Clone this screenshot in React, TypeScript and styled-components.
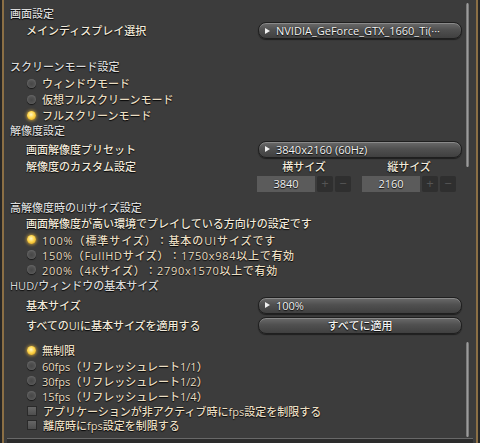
import styled, { createGlobalStyle } from "styled-components";

const GlobalStyle = createGlobalStyle`
  html, body {
    margin: 0;
    padding: 0;
    background: #262626;
  }
  body {
    font-family: "Open Sans", "Noto Sans CJK JP", sans-serif;
    font-size: 11px;
    font-weight: 500;
    text-spacing-trim: space-all;
  }
`;

const colours = {
  panel: "#3c3c3c",
  gold: "#8b6f45",
  heading: "#dadada",
  label: "#f2eadb",
  option: "#eadfc4",
};

const Window = styled.div`
  width: 480px;
  height: 443px;
  box-sizing: border-box;
  padding: 0 2px;
  background: #262626;
  display: flex;
  flex-direction: column;
`;

const Frame = styled.div`
  flex: 1;
  display: flex;
  flex-direction: column;
  border-left: 2px solid ${colours.gold};
  border-right: 2px solid ${colours.gold};
  background: ${colours.panel};
  text-shadow: 0 1px 1px rgba(0, 0, 0, 0.9), 0 0 1px rgba(0, 0, 0, 0.6);
`;

const Panel = styled.div<{ $height: number }>`
  height: ${(p) => p.$height}px;
  display: flex;
  flex-shrink: 0;
`;

const Content = styled.div<{ $top: number }>`
  flex: 1;
  padding: ${(p) => p.$top}px 0 0 6px;
  display: flex;
  flex-direction: column;
`;

const ScrollTrack = styled.div<{ $top: number }>`
  width: 4px;
  margin: 0 6px 0 4px;
  padding-top: ${(p) => p.$top}px;
`;

const Thumb = styled.div<{ $height: number }>`
  height: ${(p) => p.$height}px;
  width: 3px;
  border-radius: 2px;
  background: linear-gradient(to right, #6a6a6a, #9c9c9c 50%, #6a6a6a);
`;

const Footer = styled.div`
  height: 4px;
  margin: 0 3px;
  border-top: 1px solid #686868;
  background: #2c2c2c;
`;

const Heading = styled.div<{ $mt?: number }>`
  height: 16px;
  line-height: 16px;
  margin-top: ${(p) => p.$mt ?? 0}px;
  color: ${colours.heading};
  white-space: nowrap;
`;

const SettingRow = styled.div<{ $height: number; $mt?: number; $align?: string }>`
  display: grid;
  grid-template-columns: 1fr 204px;
  align-items: ${(p) => p.$align ?? "center"};
  height: ${(p) => p.$height}px;
  margin-top: ${(p) => p.$mt ?? 0}px;
  padding-left: 16px;
`;

const Label = styled.div`
  color: ${colours.label};
  line-height: 17px;
  white-space: nowrap;
`;

const Note = styled.div`
  height: 16px;
  line-height: 16px;
  padding-left: 16px;
  color: ${colours.label};
  white-space: nowrap;
`;

const Option = styled.div<{ $height: number; $spread?: number }>`
  display: flex;
  align-items: center;
  gap: 6px;
  height: ${(p) => p.$height}px;
  padding-left: 17px;
  color: ${colours.option};
  letter-spacing: ${(p) => p.$spread ?? 0}px;
  white-space: nowrap;
`;

const Radio = styled.span<{ $on?: boolean }>`
  width: 9px;
  height: 9px;
  border-radius: 50%;
  flex-shrink: 0;
  background: ${(p) =>
    p.$on
      ? "radial-gradient(circle at 45% 40%, #fff6c4 0, #ffd54a 45%, #c98d12 100%)"
      : "radial-gradient(circle at 50% 55%, #474747 0, #525252 45%, #7a7a7a 100%)"};
  box-shadow: ${(p) =>
    p.$on ? "0 0 3px 1px rgba(255, 196, 60, 0.55)" : "0 1px 1px rgba(0, 0, 0, 0.6)"};
`;

const Check = styled.span`
  width: 8px;
  height: 8px;
  flex-shrink: 0;
  border: 1px solid #2a2a2a;
  background: linear-gradient(#666, #4e4e4e);
`;

const Pill = styled.div<{ $center?: boolean }>`
  height: 17px;
  box-sizing: border-box;
  display: flex;
  align-items: center;
  justify-content: ${(p) => (p.$center ? "center" : "flex-start")};
  padding-left: ${(p) => (p.$center ? 0 : 6)}px;
  border: 1px solid #1f1f1f;
  border-radius: 8px;
  background: linear-gradient(#6b6b6b, #505050 45%, #404040);
  box-shadow: inset 0 1px 0 rgba(255, 255, 255, 0.22), 0 1px 1px rgba(0, 0, 0, 0.5);
  color: #f4f4f4;
  white-space: nowrap;
  overflow: hidden;
`;

const Arrow = styled.span`
  width: 0;
  height: 0;
  margin-right: 6px;
  border-left: 5px solid #f0f0f0;
  border-top: 3px solid transparent;
  border-bottom: 3px solid transparent;
`;

const SizeControls = styled.div`
  display: flex;
  gap: 11px;
  margin-left: -1px;
`;

const SizeGroup = styled.div`
  display: flex;
  flex-direction: column;
  align-items: center;
`;

const Caption = styled.div`
  line-height: 18px;
  color: ${colours.label};
`;

const Stepper = styled.div`
  display: flex;
  gap: 2px;
`;

const NumBox = styled.div`
  width: 58px;
  height: 16px;
  line-height: 16px;
  text-align: center;
  background: #5b5b5b;
  color: #f2f2f2;
`;

const StepButton = styled.div`
  width: 16px;
  height: 16px;
  line-height: 15px;
  text-align: center;
  border-radius: 2px;
  background: #2f2f2f;
  color: #555;
  font-size: 13px;
  text-shadow: none;
`;

const Dropdown = ({ value }: { value: string }) => (
  <Pill>
    <Arrow />
    {value}
  </Pill>
);

const SizeInput = ({ caption, value }: { caption: string; value: string }) => (
  <SizeGroup>
    <Caption>{caption}</Caption>
    <Stepper>
      <NumBox>{value}</NumBox>
      <StepButton>+</StepButton>
      <StepButton>−</StepButton>
    </Stepper>
  </SizeGroup>
);

const App = () => {
  return (
    <Window>
      <GlobalStyle />
      <Frame>
        <Panel $height={337}>
          <Content $top={6}>
            <Heading>画面設定</Heading>
            <SettingRow $height={17}>
              <Label>メインディスプレイ選択</Label>
              <Dropdown value="NVIDIA_GeForce_GTX_1660_Ti(···" />
            </SettingRow>

            <Heading $mt={20}>スクリーンモード設定</Heading>
            <Option $height={16}><Radio />ウィンドウモード</Option>
            <Option $height={16}><Radio />仮想フルスクリーンモード</Option>
            <Option $height={16}><Radio $on />フルスクリーンモード</Option>

            <Heading>解像度設定</Heading>
            <SettingRow $height={18} $mt={1}>
              <Label>画面解像度プリセット</Label>
              <Dropdown value="3840x2160 (60Hz)" />
            </SettingRow>
            <SettingRow $height={35} $align="start">
              <Label>解像度のカスタム設定</Label>
              <SizeControls>
                <SizeInput caption="横サイズ" value="3840" />
                <SizeInput caption="縦サイズ" value="2160" />
              </SizeControls>
            </SettingRow>

            <Heading $mt={7}>高解像度時のUIサイズ設定</Heading>
            <Note>画面解像度が高い環境でプレイしている方向けの設定です</Note>
            <Option $height={15} $spread={0.9}><Radio $on />100%（標準サイズ）：基本のUIサイズです</Option>
            <Option $height={15} $spread={0.7}><Radio />150%（FullHDサイズ）：1750x984以上で有効</Option>
            <Option $height={15} $spread={0.7}><Radio />200%（4Kサイズ）：2790x1570以上で有効</Option>

            <Heading $mt={1}>HUD/ウィンドウの基本サイズ</Heading>
            <SettingRow $height={18} $mt={2}>
              <Label>基本サイズ</Label>
              <Dropdown value="100%" />
            </SettingRow>
            <SettingRow $height={18} $mt={2}>
              <Label>すべてのUIに基本サイズを適用する</Label>
              <Pill $center>すべてに適用</Pill>
            </SettingRow>
          </Content>
          <ScrollTrack $top={3}>
            <Thumb $height={164} />
          </ScrollTrack>
        </Panel>

        <Panel $height={101}>
          <Content $top={5}>
            <Option $height={16}><Radio $on />無制限</Option>
            <Option $height={15}><Radio />60fps（リフレッシュレート1/1）</Option>
            <Option $height={15}><Radio />30fps（リフレッシュレート1/2）</Option>
            <Option $height={15}><Radio />15fps（リフレッシュレート1/4）</Option>
            <Option $height={15}><Check />アプリケーションが非アクティブ時にfps設定を制限する</Option>
            <Option $height={14}><Check />離席時にfps設定を制限する</Option>
          </Content>
          <ScrollTrack $top={5}>
            <Thumb $height={95} />
          </ScrollTrack>
        </Panel>
        <Footer />
      </Frame>
    </Window>
  );
};

export default App;
